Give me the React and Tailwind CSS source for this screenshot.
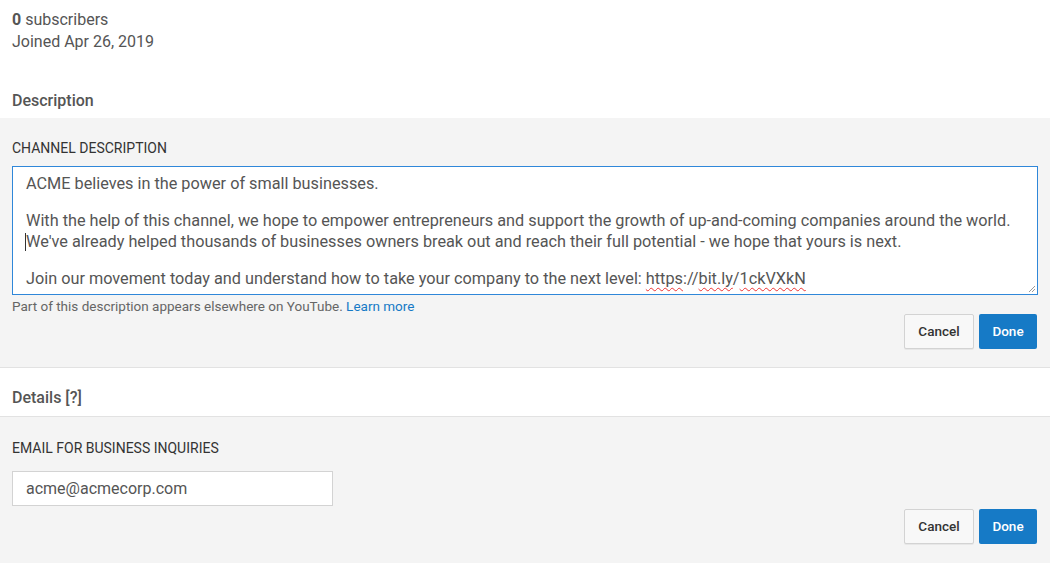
import React from 'react'

const font = { fontFamily: 'Roboto, "Noto Sans", sans-serif' }

function Buttons() {
  return (
    <div className="flex justify-end gap-[5px] pr-[13px]">
      <button className="h-[35px] w-[70px] rounded-[2px] border border-[#d3d3d3] bg-[#f8f8f8] text-[13.5px] font-medium text-[#333] shadow-[0_1px_0_rgba(0,0,0,0.05)]">
        Cancel
      </button>
      <button className="h-[35px] w-[58px] rounded-[2px] bg-[#167ac6] text-[13.5px] font-medium text-white">
        Done
      </button>
    </div>
  )
}

export default function App() {
  return (
    <div className="h-[563px] w-[1050px] overflow-hidden bg-white text-[#555]" style={font}>
      <div className="px-[12px] pt-[9px] text-[16px] leading-[22px]">
        <div><span className="font-bold">0</span> subscribers</div>
        <div>Joined Apr 26, 2019</div>
      </div>

      <div className="px-[12px] pt-[37px] pb-[6px] text-[16px] leading-[22px] font-medium text-[#555]">
        Description
      </div>

      <div className="border-b border-[#e2e2e2] bg-[#f4f4f4] pb-[18px]">
        <div className="px-[12px] pt-[22px] text-[14px] leading-[17px] text-[#333]">CHANNEL DESCRIPTION</div>
        <div className="relative mx-[12px] mt-[9px] h-[129px] border border-[#2f87d9] bg-white pl-[13px] pt-[6px] text-[16.25px] leading-[21px] text-[#555]">
          <div>ACME believes in the power of small businesses.</div>
          <div className="mt-[16px]">With the help of this channel, we hope to empower entrepreneurs and support the growth of up-and-coming companies around the world.</div>
          <div className="relative">
            <span className="absolute left-[-1px] top-[2px] h-[18px] w-px bg-[#333]" />
            We've already helped thousands of businesses owners break out and reach their full potential - we hope that yours is next.
          </div>
          <div className="mt-[16px]">
            Join our movement today and understand how to take your company to the next level:{' '}
            <span className="underline decoration-wavy decoration-[#e33] decoration-1 underline-offset-[3px]">https</span>://
            <span className="underline decoration-wavy decoration-[#e33] decoration-1 underline-offset-[3px]">bit.ly</span>/
            <span className="underline decoration-wavy decoration-[#e33] decoration-1 underline-offset-[3px]">1ckVXkN</span>
          </div>
          <svg className="absolute bottom-[1px] right-[1px]" width="9" height="9" viewBox="0 0 9 9">
            <path d="M8 2 L2 8 M8 5 L5 8" stroke="#999" strokeWidth="1" />
          </svg>
        </div>
        <div className="px-[12px] pt-[3px] text-[13.5px] leading-[16px] text-[#666]">
          Part of this description appears elsewhere on YouTube. <span className="text-[#167ac6]">Learn more</span>
        </div>
        <div>
          <Buttons />
        </div>
      </div>

      <div className="border-b border-[#e2e2e2] px-[12px] pt-[19px] pb-[7px] text-[16px] leading-[22px] font-medium text-[#555]">
        Details [?]
      </div>

      <div className="relative h-[147px] bg-[#f4f4f4]">
        <div className="px-[12px] pt-[23px] text-[14px] leading-[17px] text-[#333]">EMAIL FOR BUSINESS INQUIRIES</div>
        <div className="mx-[12px] mt-[14px] flex h-[35px] w-[321px] items-center border border-[#d3d3d3] bg-white pl-[13px] text-[16px] text-[#555]">
          acme@acmecorp.com
        </div>
        <div className="pt-[3px]">
          <Buttons />
        </div>
        <div className="absolute bottom-0 left-[96px] h-px w-[382px] bg-[#c8c8c8]" />
      </div>
    </div>
  )
}
